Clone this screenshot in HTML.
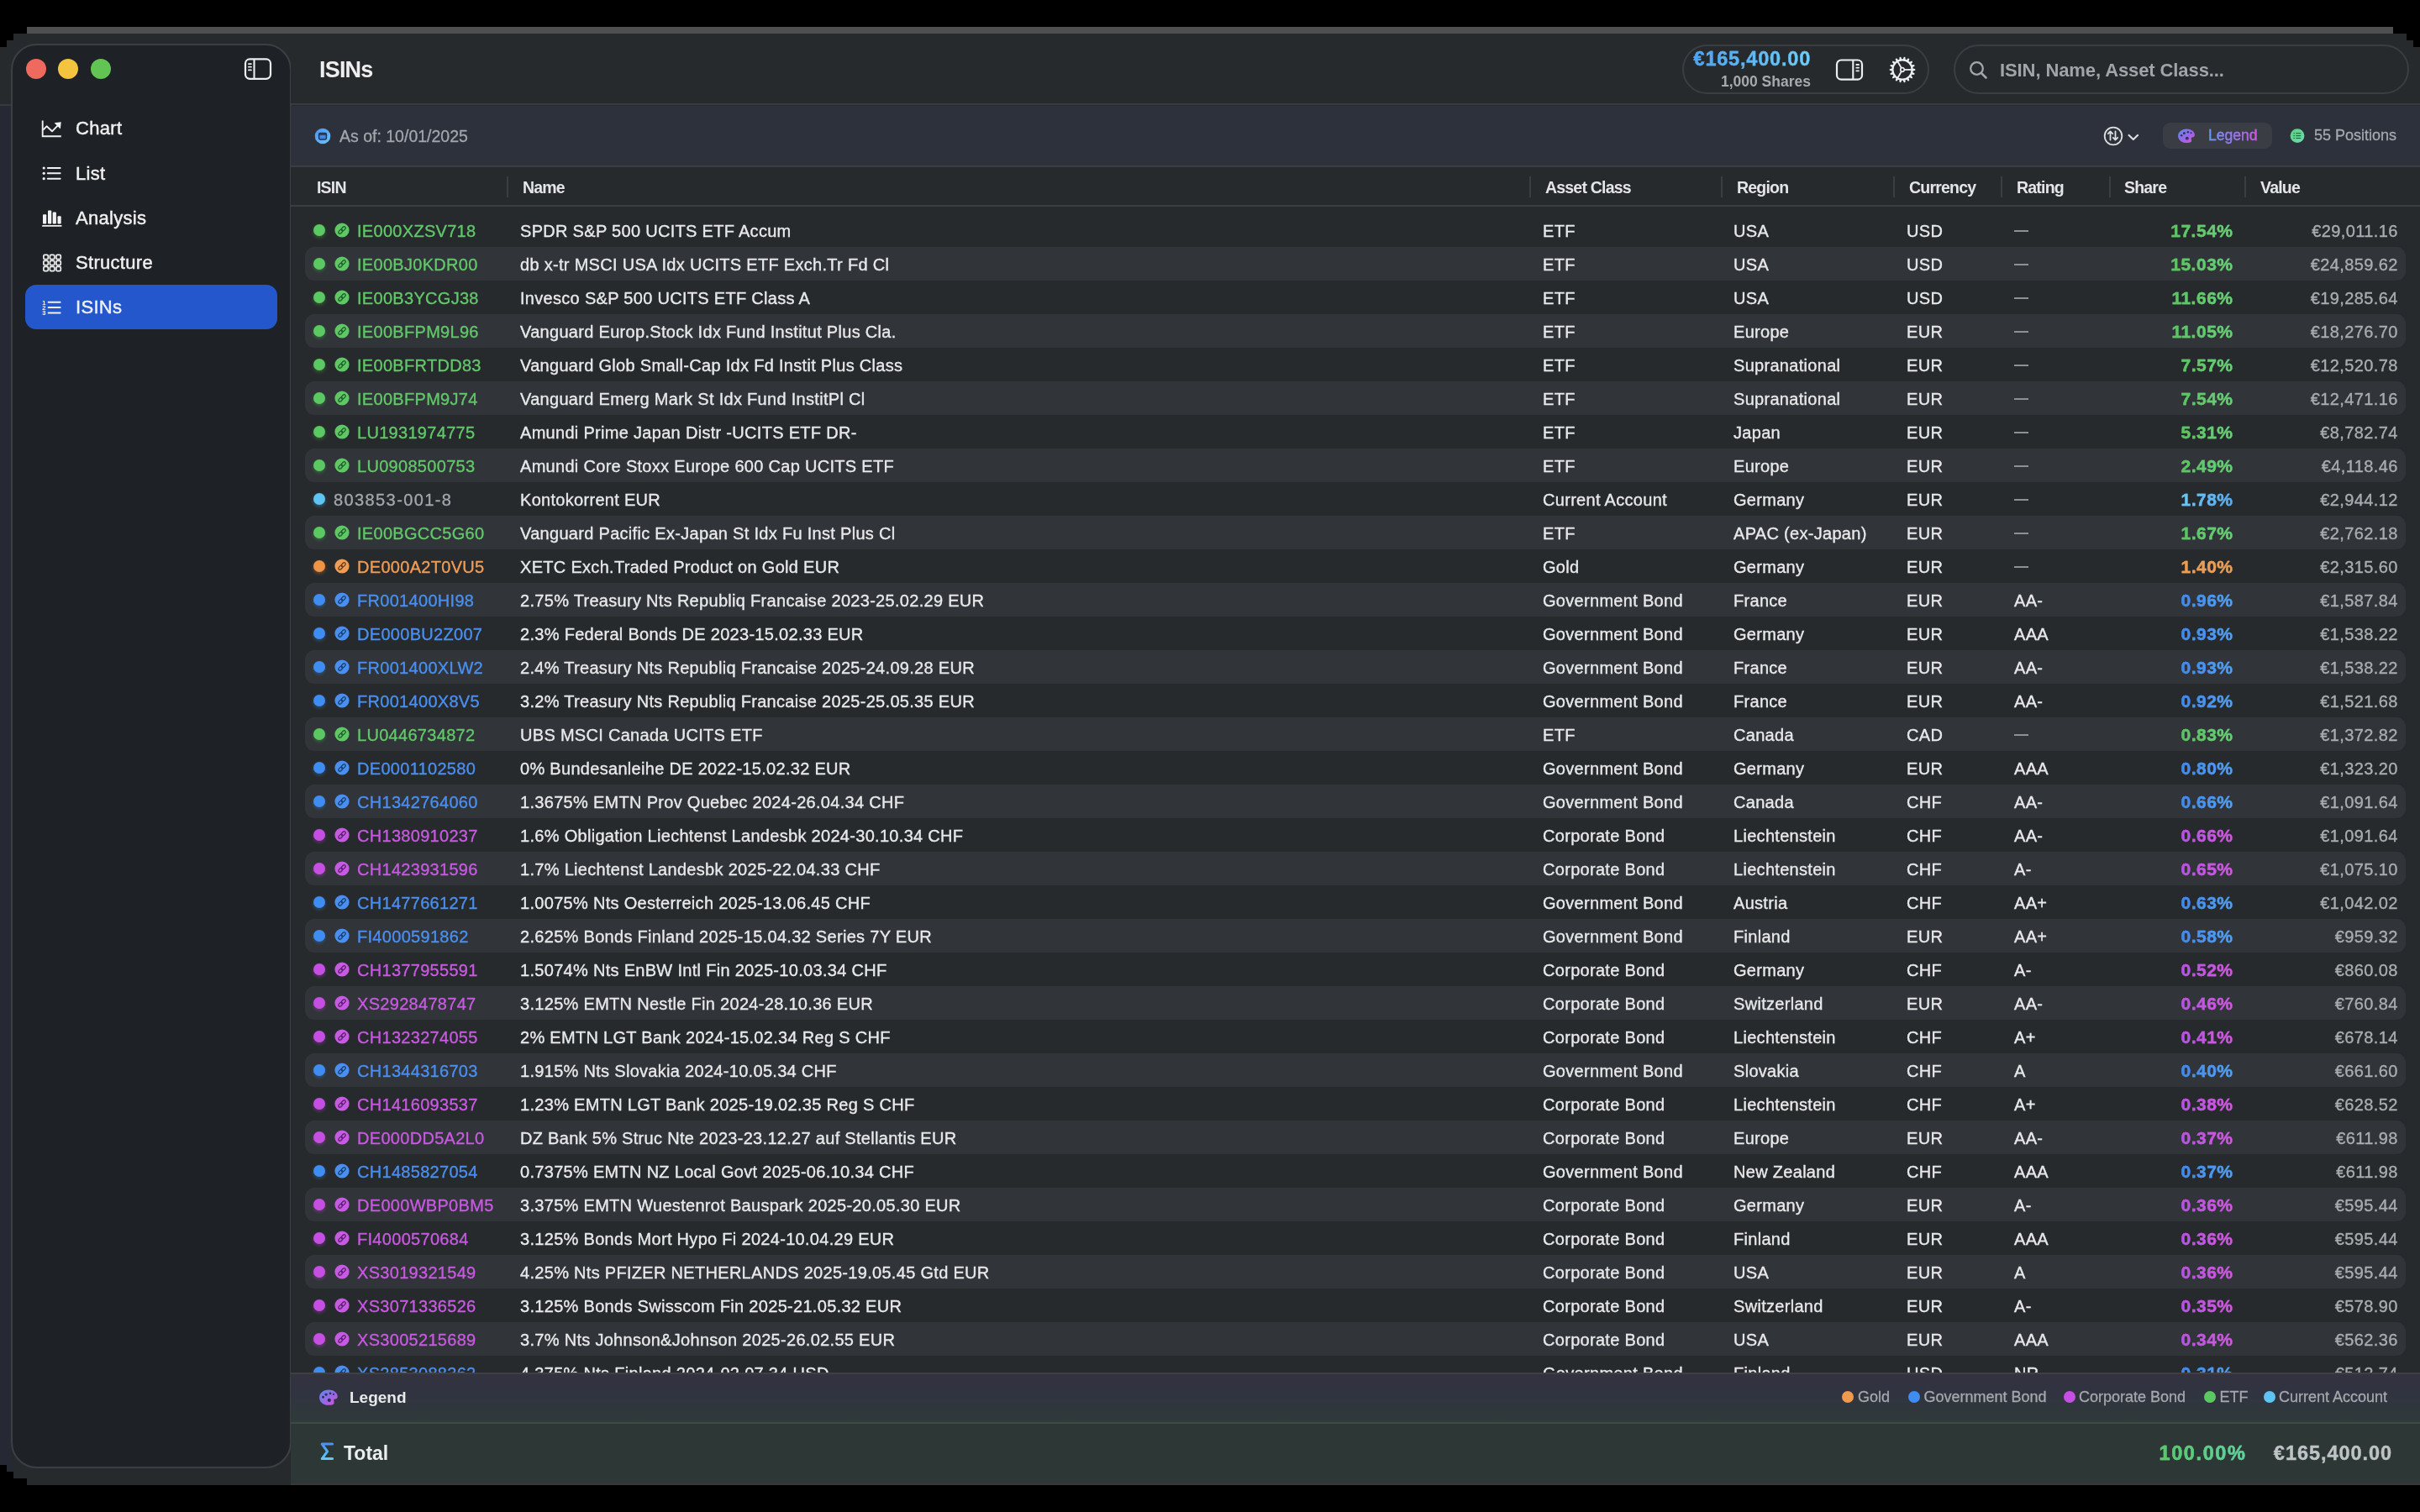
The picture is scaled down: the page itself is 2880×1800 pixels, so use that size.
<!DOCTYPE html>
<html><head><meta charset="utf-8">
<style>
*{margin:0;padding:0;box-sizing:border-box}
html,body{width:2880px;height:1800px;overflow:hidden;background:#000;font-family:"Liberation Sans",sans-serif;color:#e6e7e8}
.abs{position:absolute}
#gbar{position:absolute;left:32px;top:32px;width:2816px;height:8px;background:#4f4f50}
.wb{position:absolute;background:#272a2d}
#side{position:absolute;left:13px;top:52px;width:334px;height:1696px;border:2px solid #3c4045;border-radius:31px;background:#1e2125}
.tl{position:absolute;top:70px;width:24px;height:24px;border-radius:50%}
#main{position:absolute;left:346px;top:56px;width:2534px;height:1712px}
#toolbar{position:absolute;left:0;top:0;width:2534px;height:69px;background:#272a2d;border-bottom:2px solid #383c41}
#filter{position:absolute;left:0;top:70px;width:2534px;height:73px;background:#2c313b;border-bottom:2px solid #3a3e44}
#head{position:absolute;left:0;top:143px;width:2534px;height:47px;background:#272a2c;border-bottom:2px solid #3a3d41}
#tbl{position:absolute;left:0;top:190px;width:2534px;height:1388px;background:#272a2c;overflow:hidden}
#legend{position:absolute;left:0;top:1578px;width:2534px;height:59px;background:#33343e;border-top:2px solid #3d4046;border-bottom:2px solid #3a4442}
#total{position:absolute;left:0;top:1637px;width:2534px;height:75px;background:#2c3535}
.row{position:absolute;left:0;width:2880px;height:40px;font-size:20px;line-height:40px;white-space:nowrap;-webkit-text-stroke:0.35px currentColor;letter-spacing:.3px}
.row span{position:absolute;top:1px}
.stripe{position:absolute;left:363px;width:2500px;top:0;height:40px;border-radius:11px;background:#313438}
.dot{position:absolute;left:373px;top:13px;width:14px;height:14px;border-radius:50%}
.lk{position:absolute;left:398px;top:11px}
.isin{letter-spacing:.3px}
.nm{left:619px;color:#e8e9ea}
.ac{left:1836px;color:#e8e9ea}
.rg{left:2063px;color:#e8e9ea}
.cu{left:2269px;color:#e8e9ea}
.rat{left:2397px;color:#e8e9ea}
.em{position:absolute;left:0;top:19px;width:17px;height:2px;background:#8d9095}
.sh{right:222.5px;font-weight:bold;font-size:21px;letter-spacing:.5px;-webkit-background-clip:text;background-clip:text;color:transparent}
.va{right:26.2px;color:#a9acb0;letter-spacing:.4px}
.hd{position:absolute;top:1px;height:47px;line-height:47px;font-size:19.5px;letter-spacing:-.8px;font-weight:bold;color:#e4e5e6}
.hdiv{position:absolute;top:11px;width:2px;height:25px;background:#3a3d41}
.nav{position:absolute;left:90px;height:54px;line-height:54px;font-size:22px;color:#f0f0f0;-webkit-text-stroke:.45px currentColor;letter-spacing:.3px}
.navic{position:absolute;left:49px}
.lg span{position:absolute;top:0}
.ld{position:absolute;top:22px;width:14px;height:14px;border-radius:50%}
</style></head>
<body>
<div id="wrap" style="position:absolute;left:0;top:0;width:2880px;height:1800px;will-change:transform">
<div id="gbar"></div>
<div class="wb" style="left:16px;top:40px;width:2848px;height:8px"></div>
<div class="wb" style="left:8px;top:48px;width:2864px;height:8px"></div>
<div class="wb" style="left:0;top:56px;width:2880px;height:1688px"></div>
<div class="wb" style="left:8px;top:1744px;width:2872px;height:8px"></div>
<div class="wb" style="left:16px;top:1752px;width:2864px;height:8px"></div>
<div class="wb" style="left:32px;top:1760px;width:2848px;height:8px"></div>

<div class="abs" style="left:0;top:124px;width:14px;height:2px;background:#363a3f"></div>
<div class="abs" style="left:0;top:126px;width:13px;height:1618px;background:#252933"></div>
<div class="abs" style="left:8px;top:1744px;width:8px;height:8px;background:#252933"></div>
<div id="side"></div>
<div class="tl" style="left:31px;background:#ee6a5f"></div>
<div class="tl" style="left:69px;background:#f5c43f"></div>
<div class="tl" style="left:108px;background:#62c553"></div>

<!-- sidebar toggle icon -->
<svg class="abs" style="left:289px;top:67px" width="36" height="30" viewBox="0 0 36 30">
 <rect x="3" y="3.4" width="30" height="23.4" rx="5.2" fill="none" stroke="#eceeef" stroke-width="2.2"/>
 <line x1="13.5" y1="3.4" x2="13.5" y2="26.8" stroke="#eceeef" stroke-width="2.1"/>
 <g stroke="#eceeef" stroke-width="1.8" stroke-linecap="round"><line x1="6.9" y1="9.1" x2="9.9" y2="9.1"/><line x1="6.9" y1="12.7" x2="9.9" y2="12.7"/><line x1="6.9" y1="16.4" x2="9.9" y2="16.4"/></g>
</svg>

<!-- nav -->
<div class="abs" style="left:30px;top:339px;width:300px;height:53px;border-radius:13px;background:#2457cc"></div>
<svg class="navic abs" style="top:143px" width="26" height="22" viewBox="0 0 26 22">
 <path d="M1.7 0.6 V19.3 H23.8" fill="none" stroke="#f2f2f2" stroke-width="1.9"/>
 <path d="M2.4 11.6 L6.5 7.3 L13 13.3 L19.6 6.6" fill="none" stroke="#f2f2f2" stroke-width="1.9" stroke-linejoin="round"/>
 <path d="M23.8 2.2 L15.6 3.2 L22.8 10.4 Z" fill="#f2f2f2"/>
</svg>
<div class="nav" style="top:126px">Chart</div>
<svg class="navic abs" style="top:197px" width="26" height="20" viewBox="0 0 26 20">
 <g fill="#f2f2f2"><circle cx="3.2" cy="3" r="1.6"/><circle cx="3.2" cy="9.3" r="1.6"/><circle cx="3.2" cy="15.7" r="1.6"/></g>
 <g stroke="#f2f2f2" stroke-width="2" stroke-linecap="round"><line x1="7.8" y1="3" x2="22.6" y2="3"/><line x1="7.8" y1="9.3" x2="22.6" y2="9.3"/><line x1="7.8" y1="15.7" x2="22.6" y2="15.7"/></g>
</svg>
<div class="nav" style="top:180px">List</div>
<svg class="navic abs" style="top:249px" width="26" height="22" viewBox="0 0 26 22">
 <g fill="#f2f2f2"><rect x="2" y="6.3" width="4.2" height="11.1" rx="0.9"/><rect x="8" y="1.4" width="4.2" height="16" rx="0.9"/><rect x="13.7" y="3.5" width="4.2" height="13.9" rx="0.9"/><rect x="19.5" y="8.3" width="4.2" height="9.1" rx="0.9"/><rect x="1" y="19" width="23.6" height="1.8" rx="0.9"/></g>
</svg>
<div class="nav" style="top:233px">Analysis</div>
<svg class="navic abs" style="top:302px" width="26" height="24" viewBox="0 0 26 24">
 <g fill="none" stroke="#f2f2f2" stroke-width="1.7">
 <rect x="2.9" y="1.3" width="5.4" height="5.4" rx="1.5"/><rect x="10.4" y="1.3" width="5.4" height="5.4" rx="1.5"/><rect x="17.9" y="1.3" width="5.4" height="5.4" rx="1.5"/>
 <rect x="2.9" y="8.3" width="5.4" height="5.4" rx="1.5"/><rect x="10.4" y="8.3" width="5.4" height="5.4" rx="1.5"/><rect x="17.9" y="8.3" width="5.4" height="5.4" rx="1.5"/>
 <rect x="2.9" y="15.3" width="5.4" height="5.4" rx="1.5"/><rect x="10.4" y="15.3" width="5.4" height="5.4" rx="1.5"/><rect x="17.9" y="15.3" width="5.4" height="5.4" rx="1.5"/>
 </g>
</svg>
<div class="nav" style="top:286px">Structure</div>
<svg class="navic abs" style="top:355px" width="26" height="22" viewBox="0 0 26 22">
 <g fill="#f2f2f2" font-family="Liberation Sans" font-size="7.6" font-weight="bold"><text x="1.2" y="7.6">1</text><text x="1.2" y="14">2</text><text x="1.2" y="20.4">3</text></g>
 <g stroke="#f2f2f2" stroke-width="2" stroke-linecap="round"><line x1="8.6" y1="4.7" x2="22.6" y2="4.7"/><line x1="8.6" y1="11.1" x2="22.6" y2="11.1"/><line x1="8.6" y1="17.5" x2="22.6" y2="17.5"/></g>
</svg>
<div class="nav" style="top:339px">ISINs</div>

<div id="main">
 <div id="toolbar">
  <div class="abs" style="left:34px;top:12px;height:30px;line-height:30px;font-size:27px;font-weight:bold;color:#eeeeef;letter-spacing:-0.8px">ISINs</div>
  <!-- value capsule -->
  <div class="abs" style="left:1656px;top:-3px;width:294px;height:59px;border:2px solid #3a3e43;border-radius:30px"></div>
  <div class="abs" style="left:1600px;top:1px;width:209px;text-align:right;font-size:23.5px;letter-spacing:.8px;font-weight:bold;line-height:26px;background-image:linear-gradient(90deg,#3e8cf1,#6fd0f6);-webkit-background-clip:text;background-clip:text;color:transparent;-webkit-text-stroke:.3px #55aef3">€165,400.00</div>
  <div class="abs" style="left:1600px;top:31px;width:209px;text-align:right;font-size:17.5px;font-weight:bold;line-height:20px;color:#a6a9ad">1,000 Shares</div>
  <svg class="abs" style="left:1836px;top:12px" width="36" height="30" viewBox="0 0 36 30">
   <rect x="4" y="3.5" width="30" height="23.1" rx="5.2" fill="none" stroke="#eceeef" stroke-width="2.2"/>
   <line x1="23.3" y1="3.5" x2="23.3" y2="26.6" stroke="#eceeef" stroke-width="2.1"/>
   <g stroke="#eceeef" stroke-width="1.8" stroke-linecap="round"><line x1="27.3" y1="9" x2="30" y2="9"/><line x1="27.3" y1="12.65" x2="30" y2="12.65"/><line x1="27.3" y1="16.3" x2="30" y2="16.3"/></g>
  </svg>
  <svg class="abs" style="left:1900px;top:9px" width="36" height="36" viewBox="0 0 36 36">
   <g transform="translate(18,18)">
    <path fill="#eceeef" fill-rule="evenodd" d="M12.62 -1.44 L15.28 -0.80 L15.28 0.80 L12.62 1.44 L12.35 2.96 L14.63 4.47 L14.08 5.98 L11.37 5.67 L10.59 7.01 L12.22 9.21 L11.19 10.43 L8.74 9.21 L7.55 10.21 L8.33 12.83 L6.95 13.63 L5.06 11.65 L3.61 12.18 L3.44 14.91 L1.86 15.19 L0.78 12.68 L-0.78 12.68 L-1.86 15.19 L-3.44 14.91 L-3.61 12.18 L-5.06 11.65 L-6.95 13.63 L-8.33 12.83 L-7.55 10.21 L-8.74 9.21 L-11.19 10.43 L-12.22 9.21 L-10.59 7.01 L-11.37 5.67 L-14.08 5.98 L-14.63 4.47 L-12.35 2.96 L-12.62 1.44 L-15.28 0.80 L-15.28 -0.80 L-12.62 -1.44 L-12.35 -2.96 L-14.63 -4.47 L-14.08 -5.98 L-11.37 -5.67 L-10.59 -7.01 L-12.22 -9.21 L-11.19 -10.43 L-8.74 -9.21 L-7.55 -10.21 L-8.33 -12.83 L-6.95 -13.63 L-5.06 -11.65 L-3.61 -12.18 L-3.44 -14.91 L-1.86 -15.19 L-0.78 -12.68 L0.78 -12.68 L1.86 -15.19 L3.44 -14.91 L3.61 -12.18 L5.06 -11.65 L6.95 -13.63 L8.33 -12.83 L7.55 -10.21 L8.74 -9.21 L11.19 -10.43 L12.22 -9.21 L10.59 -7.01 L11.37 -5.67 L14.08 -5.98 L14.63 -4.47 L12.35 -2.96 Z M10.5 0 A10.5 10.5 0 1 0 -10.5 0 A10.5 10.5 0 1 0 10.5 0 Z"/><g stroke="#eceeef" stroke-width="1.8"><line x1="2.60" y1="0.00" x2="11.50" y2="0.00"/><line x1="-1.30" y1="2.25" x2="-5.75" y2="9.96"/><line x1="-1.30" y1="-2.25" x2="-5.75" y2="-9.96"/></g><circle r="2.3" fill="none" stroke="#eceeef" stroke-width="1.7"/>
   </g>
  </svg>
  <!-- search -->
  <div class="abs" style="left:1979px;top:-3px;width:542px;height:59px;border:2px solid #3a3e43;border-radius:30px"></div>
  <svg class="abs" style="left:1997px;top:16px" width="24" height="24" viewBox="0 0 24 24">
   <circle cx="9.5" cy="9.5" r="7.3" fill="none" stroke="#a3a6aa" stroke-width="2.3"/>
   <line x1="14.8" y1="14.8" x2="20.5" y2="20.5" stroke="#a3a6aa" stroke-width="2.6" stroke-linecap="round"/>
  </svg>
  <div class="abs" style="left:2034px;top:0;height:56px;line-height:56px;font-size:22px;letter-spacing:-.1px;font-weight:bold;color:#a1a4a8">ISIN, Name, Asset Class...</div>
 </div>

 <div id="filter">
  <svg class="abs" style="left:28px;top:26px" width="20" height="20" viewBox="0 0 20 20">
   <defs><linearGradient id="cg" x1="0" y1="0" x2="1" y2="1"><stop offset="0" stop-color="#4f92ee"/><stop offset="1" stop-color="#6cc6f6"/></linearGradient></defs>
   <circle cx="10" cy="10" r="9.3" fill="url(#cg)"/>
   <rect x="5.6" y="6.4" width="8.8" height="7.6" rx="1.4" fill="#4a86d8" stroke="#17365c" stroke-width="1.5"/>
   <line x1="5.6" y1="8" x2="14.4" y2="8" stroke="#17365c" stroke-width="1.6"/>
  </svg>
  <div class="abs" style="left:58px;top:0;height:72px;line-height:72px;font-size:19.5px;color:#a3a6ab;-webkit-text-stroke:.3px currentColor">As of: 10/01/2025</div>
  <!-- sort -->
  <svg class="abs" style="left:2156px;top:23px" width="48" height="26" viewBox="0 0 48 26">
   <circle cx="13" cy="13" r="10.3" fill="none" stroke="#dcdee0" stroke-width="1.8"/>
   <g stroke="#dcdee0" stroke-width="1.8" fill="none" stroke-linecap="round" stroke-linejoin="round">
    <path d="M9.5 17.5 V7.5 M6.8 10.2 L9.5 7.5 L12.2 10.2"/>
    <path d="M15.5 7.5 V17.5 M12.8 14.8 L15.5 17.5 L18.2 14.8"/>
    <path d="M31.6 12 L36.8 17 L42 12" stroke-width="2.2"/>
   </g>
  </svg>
  <div class="abs" style="left:2228px;top:20px;width:130px;height:31px;border-radius:9px;background:#3a3d44"></div>
  <svg class="abs" style="left:2246px;top:27px" width="22" height="18" viewBox="0 0 22 18">
   <defs><linearGradient id="pg" x1="0" y1="0" x2="1" y2="1"><stop offset="0" stop-color="#5b8cf0"/><stop offset=".55" stop-color="#9a66e8"/><stop offset="1" stop-color="#e04fd6"/></linearGradient></defs>
   <path d="M10 0.4 C15.5 0.4 19.9 3.5 19.9 7.6 C19.9 9.6 18.6 10.4 17 10.4 C16 10.4 15.6 11.2 15.9 12.4 C16.3 14 16.5 15.8 14.5 16.6 C13 17.1 11.5 17.1 10 17.1 C4.5 17.1 0.1 13.5 0.1 8.7 C0.1 4.1 4.5 0.4 10 0.4 Z" fill="url(#pg)"/>
   <g fill="#34325a"><circle cx="4.1" cy="8.3" r="1.3"/><circle cx="7.4" cy="5.4" r="1.5"/><circle cx="11.9" cy="4.3" r="1.2"/><circle cx="15.6" cy="5.2" r="1.05"/><circle cx="10.8" cy="11.7" r="1.9"/></g>
  </svg>
  <div class="abs" style="left:2282px;top:20px;height:31px;line-height:31px;font-size:17.5px;background-image:linear-gradient(90deg,#5a9df0,#9a78ea,#d653e0);-webkit-background-clip:text;background-clip:text;color:transparent;-webkit-text-stroke:.3px #8f7ae9">Legend</div>
  <svg class="abs" style="left:2379px;top:27px" width="18" height="18" viewBox="0 0 18 18">
   <defs><linearGradient id="gg" x1="0" y1="0" x2="1" y2="1"><stop offset="0" stop-color="#5ccf78"/><stop offset="1" stop-color="#70dbb4"/></linearGradient></defs>
   <circle cx="9" cy="8.6" r="8.4" fill="url(#gg)"/>
   <g stroke="#1f6a40" stroke-width="1.15"><line x1="7.2" y1="5.7" x2="13.3" y2="5.7"/><line x1="7.2" y1="8.6" x2="13.3" y2="8.6"/><line x1="7.2" y1="11.5" x2="13.3" y2="11.5"/><line x1="4.4" y1="5.7" x2="5.9" y2="5.7"/><line x1="4.4" y1="8.6" x2="5.9" y2="8.6"/><line x1="4.4" y1="11.5" x2="5.9" y2="11.5"/></g>
  </svg>
  <div class="abs" style="left:2408px;top:20px;height:31px;line-height:31px;font-size:18px;color:#a6a9ad;-webkit-text-stroke:.3px currentColor">55 Positions</div>
 </div>

 <div id="tbl"></div>
 <div id="head">
  <div class="hd" style="left:31px">ISIN</div>
  <div class="hdiv" style="left:257px"></div>
  <div class="hd" style="left:276px">Name</div>
  <div class="hdiv" style="left:1474px"></div>
  <div class="hd" style="left:1493px">Asset Class</div>
  <div class="hdiv" style="left:1702px"></div>
  <div class="hd" style="left:1721px">Region</div>
  <div class="hdiv" style="left:1907px"></div>
  <div class="hd" style="left:1926px">Currency</div>
  <div class="hdiv" style="left:2035px"></div>
  <div class="hd" style="left:2054px">Rating</div>
  <div class="hdiv" style="left:2164px"></div>
  <div class="hd" style="left:2182px">Share</div>
  <div class="hdiv" style="left:2325px"></div>
  <div class="hd" style="left:2344px">Value</div>
 </div>
</div>

<div id="rows" style="position:absolute;left:0;top:0;width:2880px;height:1634px;overflow:hidden;clip-path:inset(246px 0 0 346px)">
<div class="row" style="top:254px"><i class="dot" style="background:#5bc862;box-shadow:0 2px 4px #5bc86255"></i><svg class="lk" width="18" height="18" viewBox="0 0 18 18"><circle cx="9" cy="9" r="8.6" fill="#5fc766"/><g transform="rotate(-45 9 9)" fill="none" stroke="#1f5c25" stroke-width="1.25"><rect x="3.7" y="7.3" width="5.8" height="3.4" rx="1.7"/><rect x="8.5" y="7.3" width="5.8" height="3.4" rx="1.7"/></g></svg><span class="isin" style="left:425px;color:#62c76a">IE000XZSV718</span><span class="nm">SPDR S&amp;P 500 UCITS ETF Accum</span><span class="ac">ETF</span><span class="rg">USA</span><span class="cu">USD</span><span class="rat dash"><b class='em'></b></span><span class="sh" style="background-image:linear-gradient(90deg,#5ac35f,#6dd07e);-webkit-text-stroke:.35px #62c96e">17.54%</span><span class="va">€29,011.16</span></div>
<div class="row" style="top:294px"><div class="stripe"></div><i class="dot" style="background:#5bc862;box-shadow:0 2px 4px #5bc86255"></i><svg class="lk" width="18" height="18" viewBox="0 0 18 18"><circle cx="9" cy="9" r="8.6" fill="#5fc766"/><g transform="rotate(-45 9 9)" fill="none" stroke="#1f5c25" stroke-width="1.25"><rect x="3.7" y="7.3" width="5.8" height="3.4" rx="1.7"/><rect x="8.5" y="7.3" width="5.8" height="3.4" rx="1.7"/></g></svg><span class="isin" style="left:425px;color:#62c76a">IE00BJ0KDR00</span><span class="nm">db x-tr MSCI USA Idx UCITS ETF Exch.Tr Fd Cl</span><span class="ac">ETF</span><span class="rg">USA</span><span class="cu">USD</span><span class="rat dash"><b class='em'></b></span><span class="sh" style="background-image:linear-gradient(90deg,#5ac35f,#6dd07e);-webkit-text-stroke:.35px #62c96e">15.03%</span><span class="va">€24,859.62</span></div>
<div class="row" style="top:334px"><i class="dot" style="background:#5bc862;box-shadow:0 2px 4px #5bc86255"></i><svg class="lk" width="18" height="18" viewBox="0 0 18 18"><circle cx="9" cy="9" r="8.6" fill="#5fc766"/><g transform="rotate(-45 9 9)" fill="none" stroke="#1f5c25" stroke-width="1.25"><rect x="3.7" y="7.3" width="5.8" height="3.4" rx="1.7"/><rect x="8.5" y="7.3" width="5.8" height="3.4" rx="1.7"/></g></svg><span class="isin" style="left:425px;color:#62c76a">IE00B3YCGJ38</span><span class="nm">Invesco S&amp;P 500 UCITS ETF Class A</span><span class="ac">ETF</span><span class="rg">USA</span><span class="cu">USD</span><span class="rat dash"><b class='em'></b></span><span class="sh" style="background-image:linear-gradient(90deg,#5ac35f,#6dd07e);-webkit-text-stroke:.35px #62c96e">11.66%</span><span class="va">€19,285.64</span></div>
<div class="row" style="top:374px"><div class="stripe"></div><i class="dot" style="background:#5bc862;box-shadow:0 2px 4px #5bc86255"></i><svg class="lk" width="18" height="18" viewBox="0 0 18 18"><circle cx="9" cy="9" r="8.6" fill="#5fc766"/><g transform="rotate(-45 9 9)" fill="none" stroke="#1f5c25" stroke-width="1.25"><rect x="3.7" y="7.3" width="5.8" height="3.4" rx="1.7"/><rect x="8.5" y="7.3" width="5.8" height="3.4" rx="1.7"/></g></svg><span class="isin" style="left:425px;color:#62c76a">IE00BFPM9L96</span><span class="nm">Vanguard Europ.Stock Idx Fund Institut Plus Cla.</span><span class="ac">ETF</span><span class="rg">Europe</span><span class="cu">EUR</span><span class="rat dash"><b class='em'></b></span><span class="sh" style="background-image:linear-gradient(90deg,#5ac35f,#6dd07e);-webkit-text-stroke:.35px #62c96e">11.05%</span><span class="va">€18,276.70</span></div>
<div class="row" style="top:414px"><i class="dot" style="background:#5bc862;box-shadow:0 2px 4px #5bc86255"></i><svg class="lk" width="18" height="18" viewBox="0 0 18 18"><circle cx="9" cy="9" r="8.6" fill="#5fc766"/><g transform="rotate(-45 9 9)" fill="none" stroke="#1f5c25" stroke-width="1.25"><rect x="3.7" y="7.3" width="5.8" height="3.4" rx="1.7"/><rect x="8.5" y="7.3" width="5.8" height="3.4" rx="1.7"/></g></svg><span class="isin" style="left:425px;color:#62c76a">IE00BFRTDD83</span><span class="nm">Vanguard Glob Small-Cap Idx Fd Instit Plus Class</span><span class="ac">ETF</span><span class="rg">Supranational</span><span class="cu">EUR</span><span class="rat dash"><b class='em'></b></span><span class="sh" style="background-image:linear-gradient(90deg,#5ac35f,#6dd07e);-webkit-text-stroke:.35px #62c96e">7.57%</span><span class="va">€12,520.78</span></div>
<div class="row" style="top:454px"><div class="stripe"></div><i class="dot" style="background:#5bc862;box-shadow:0 2px 4px #5bc86255"></i><svg class="lk" width="18" height="18" viewBox="0 0 18 18"><circle cx="9" cy="9" r="8.6" fill="#5fc766"/><g transform="rotate(-45 9 9)" fill="none" stroke="#1f5c25" stroke-width="1.25"><rect x="3.7" y="7.3" width="5.8" height="3.4" rx="1.7"/><rect x="8.5" y="7.3" width="5.8" height="3.4" rx="1.7"/></g></svg><span class="isin" style="left:425px;color:#62c76a">IE00BFPM9J74</span><span class="nm">Vanguard Emerg Mark St Idx Fund InstitPl Cl</span><span class="ac">ETF</span><span class="rg">Supranational</span><span class="cu">EUR</span><span class="rat dash"><b class='em'></b></span><span class="sh" style="background-image:linear-gradient(90deg,#5ac35f,#6dd07e);-webkit-text-stroke:.35px #62c96e">7.54%</span><span class="va">€12,471.16</span></div>
<div class="row" style="top:494px"><i class="dot" style="background:#5bc862;box-shadow:0 2px 4px #5bc86255"></i><svg class="lk" width="18" height="18" viewBox="0 0 18 18"><circle cx="9" cy="9" r="8.6" fill="#5fc766"/><g transform="rotate(-45 9 9)" fill="none" stroke="#1f5c25" stroke-width="1.25"><rect x="3.7" y="7.3" width="5.8" height="3.4" rx="1.7"/><rect x="8.5" y="7.3" width="5.8" height="3.4" rx="1.7"/></g></svg><span class="isin" style="left:425px;color:#62c76a">LU1931974775</span><span class="nm">Amundi Prime Japan Distr -UCITS ETF DR-</span><span class="ac">ETF</span><span class="rg">Japan</span><span class="cu">EUR</span><span class="rat dash"><b class='em'></b></span><span class="sh" style="background-image:linear-gradient(90deg,#5ac35f,#6dd07e);-webkit-text-stroke:.35px #62c96e">5.31%</span><span class="va">€8,782.74</span></div>
<div class="row" style="top:534px"><div class="stripe"></div><i class="dot" style="background:#5bc862;box-shadow:0 2px 4px #5bc86255"></i><svg class="lk" width="18" height="18" viewBox="0 0 18 18"><circle cx="9" cy="9" r="8.6" fill="#5fc766"/><g transform="rotate(-45 9 9)" fill="none" stroke="#1f5c25" stroke-width="1.25"><rect x="3.7" y="7.3" width="5.8" height="3.4" rx="1.7"/><rect x="8.5" y="7.3" width="5.8" height="3.4" rx="1.7"/></g></svg><span class="isin" style="left:425px;color:#62c76a">LU0908500753</span><span class="nm">Amundi Core Stoxx Europe 600 Cap UCITS ETF</span><span class="ac">ETF</span><span class="rg">Europe</span><span class="cu">EUR</span><span class="rat dash"><b class='em'></b></span><span class="sh" style="background-image:linear-gradient(90deg,#5ac35f,#6dd07e);-webkit-text-stroke:.35px #62c96e">2.49%</span><span class="va">€4,118.46</span></div>
<div class="row" style="top:574px"><i class="dot" style="background:#5ec4f2;box-shadow:0 2px 4px #5ec4f255"></i><span class="isin" style="left:397px;color:#a3a6ab;letter-spacing:1.4px">803853-001-8</span><span class="nm">Kontokorrent EUR</span><span class="ac">Current Account</span><span class="rg">Germany</span><span class="cu">EUR</span><span class="rat dash"><b class='em'></b></span><span class="sh" style="background-image:linear-gradient(90deg,#6cc8f0,#5aa8ef);-webkit-text-stroke:.35px #63b8ef">1.78%</span><span class="va">€2,944.12</span></div>
<div class="row" style="top:614px"><div class="stripe"></div><i class="dot" style="background:#5bc862;box-shadow:0 2px 4px #5bc86255"></i><svg class="lk" width="18" height="18" viewBox="0 0 18 18"><circle cx="9" cy="9" r="8.6" fill="#5fc766"/><g transform="rotate(-45 9 9)" fill="none" stroke="#1f5c25" stroke-width="1.25"><rect x="3.7" y="7.3" width="5.8" height="3.4" rx="1.7"/><rect x="8.5" y="7.3" width="5.8" height="3.4" rx="1.7"/></g></svg><span class="isin" style="left:425px;color:#62c76a">IE00BGCC5G60</span><span class="nm">Vanguard Pacific Ex-Japan St Idx Fu Inst Plus Cl</span><span class="ac">ETF</span><span class="rg">APAC (ex-Japan)</span><span class="cu">EUR</span><span class="rat dash"><b class='em'></b></span><span class="sh" style="background-image:linear-gradient(90deg,#5ac35f,#6dd07e);-webkit-text-stroke:.35px #62c96e">1.67%</span><span class="va">€2,762.18</span></div>
<div class="row" style="top:654px"><i class="dot" style="background:#ef9445;box-shadow:0 2px 4px #ef944555"></i><svg class="lk" width="18" height="18" viewBox="0 0 18 18"><circle cx="9" cy="9" r="8.6" fill="#ef9c55"/><g transform="rotate(-45 9 9)" fill="none" stroke="#6a3a12" stroke-width="1.25"><rect x="3.7" y="7.3" width="5.8" height="3.4" rx="1.7"/><rect x="8.5" y="7.3" width="5.8" height="3.4" rx="1.7"/></g></svg><span class="isin" style="left:425px;color:#ef9c55">DE000A2T0VU5</span><span class="nm">XETC Exch.Traded Product on Gold EUR</span><span class="ac">Gold</span><span class="rg">Germany</span><span class="cu">EUR</span><span class="rat dash"><b class='em'></b></span><span class="sh" style="background-image:linear-gradient(90deg,#ee9c4e,#e8a05a);-webkit-text-stroke:.35px #eb9e54">1.40%</span><span class="va">€2,315.60</span></div>
<div class="row" style="top:694px"><div class="stripe"></div><i class="dot" style="background:#3f8cf2;box-shadow:0 2px 4px #3f8cf255"></i><svg class="lk" width="18" height="18" viewBox="0 0 18 18"><circle cx="9" cy="9" r="8.6" fill="#4a8ff0"/><g transform="rotate(-45 9 9)" fill="none" stroke="#173d73" stroke-width="1.25"><rect x="3.7" y="7.3" width="5.8" height="3.4" rx="1.7"/><rect x="8.5" y="7.3" width="5.8" height="3.4" rx="1.7"/></g></svg><span class="isin" style="left:425px;color:#4a8ff0">FR001400HI98</span><span class="nm">2.75% Treasury Nts Republiq Francaise 2023-25.02.29 EUR</span><span class="ac">Government Bond</span><span class="rg">France</span><span class="cu">EUR</span><span class="rat">AA-</span><span class="sh" style="background-image:linear-gradient(90deg,#3e88f0,#58a2f2);-webkit-text-stroke:.35px #4a94f1">0.96%</span><span class="va">€1,587.84</span></div>
<div class="row" style="top:734px"><i class="dot" style="background:#3f8cf2;box-shadow:0 2px 4px #3f8cf255"></i><svg class="lk" width="18" height="18" viewBox="0 0 18 18"><circle cx="9" cy="9" r="8.6" fill="#4a8ff0"/><g transform="rotate(-45 9 9)" fill="none" stroke="#173d73" stroke-width="1.25"><rect x="3.7" y="7.3" width="5.8" height="3.4" rx="1.7"/><rect x="8.5" y="7.3" width="5.8" height="3.4" rx="1.7"/></g></svg><span class="isin" style="left:425px;color:#4a8ff0">DE000BU2Z007</span><span class="nm">2.3% Federal Bonds DE 2023-15.02.33 EUR</span><span class="ac">Government Bond</span><span class="rg">Germany</span><span class="cu">EUR</span><span class="rat">AAA</span><span class="sh" style="background-image:linear-gradient(90deg,#3e88f0,#58a2f2);-webkit-text-stroke:.35px #4a94f1">0.93%</span><span class="va">€1,538.22</span></div>
<div class="row" style="top:774px"><div class="stripe"></div><i class="dot" style="background:#3f8cf2;box-shadow:0 2px 4px #3f8cf255"></i><svg class="lk" width="18" height="18" viewBox="0 0 18 18"><circle cx="9" cy="9" r="8.6" fill="#4a8ff0"/><g transform="rotate(-45 9 9)" fill="none" stroke="#173d73" stroke-width="1.25"><rect x="3.7" y="7.3" width="5.8" height="3.4" rx="1.7"/><rect x="8.5" y="7.3" width="5.8" height="3.4" rx="1.7"/></g></svg><span class="isin" style="left:425px;color:#4a8ff0">FR001400XLW2</span><span class="nm">2.4% Treasury Nts Republiq Francaise 2025-24.09.28 EUR</span><span class="ac">Government Bond</span><span class="rg">France</span><span class="cu">EUR</span><span class="rat">AA-</span><span class="sh" style="background-image:linear-gradient(90deg,#3e88f0,#58a2f2);-webkit-text-stroke:.35px #4a94f1">0.93%</span><span class="va">€1,538.22</span></div>
<div class="row" style="top:814px"><i class="dot" style="background:#3f8cf2;box-shadow:0 2px 4px #3f8cf255"></i><svg class="lk" width="18" height="18" viewBox="0 0 18 18"><circle cx="9" cy="9" r="8.6" fill="#4a8ff0"/><g transform="rotate(-45 9 9)" fill="none" stroke="#173d73" stroke-width="1.25"><rect x="3.7" y="7.3" width="5.8" height="3.4" rx="1.7"/><rect x="8.5" y="7.3" width="5.8" height="3.4" rx="1.7"/></g></svg><span class="isin" style="left:425px;color:#4a8ff0">FR001400X8V5</span><span class="nm">3.2% Treasury Nts Republiq Francaise 2025-25.05.35 EUR</span><span class="ac">Government Bond</span><span class="rg">France</span><span class="cu">EUR</span><span class="rat">AA-</span><span class="sh" style="background-image:linear-gradient(90deg,#3e88f0,#58a2f2);-webkit-text-stroke:.35px #4a94f1">0.92%</span><span class="va">€1,521.68</span></div>
<div class="row" style="top:854px"><div class="stripe"></div><i class="dot" style="background:#5bc862;box-shadow:0 2px 4px #5bc86255"></i><svg class="lk" width="18" height="18" viewBox="0 0 18 18"><circle cx="9" cy="9" r="8.6" fill="#5fc766"/><g transform="rotate(-45 9 9)" fill="none" stroke="#1f5c25" stroke-width="1.25"><rect x="3.7" y="7.3" width="5.8" height="3.4" rx="1.7"/><rect x="8.5" y="7.3" width="5.8" height="3.4" rx="1.7"/></g></svg><span class="isin" style="left:425px;color:#62c76a">LU0446734872</span><span class="nm">UBS MSCI Canada UCITS ETF</span><span class="ac">ETF</span><span class="rg">Canada</span><span class="cu">CAD</span><span class="rat dash"><b class='em'></b></span><span class="sh" style="background-image:linear-gradient(90deg,#5ac35f,#6dd07e);-webkit-text-stroke:.35px #62c96e">0.83%</span><span class="va">€1,372.82</span></div>
<div class="row" style="top:894px"><i class="dot" style="background:#3f8cf2;box-shadow:0 2px 4px #3f8cf255"></i><svg class="lk" width="18" height="18" viewBox="0 0 18 18"><circle cx="9" cy="9" r="8.6" fill="#4a8ff0"/><g transform="rotate(-45 9 9)" fill="none" stroke="#173d73" stroke-width="1.25"><rect x="3.7" y="7.3" width="5.8" height="3.4" rx="1.7"/><rect x="8.5" y="7.3" width="5.8" height="3.4" rx="1.7"/></g></svg><span class="isin" style="left:425px;color:#4a8ff0">DE0001102580</span><span class="nm">0% Bundesanleihe DE 2022-15.02.32 EUR</span><span class="ac">Government Bond</span><span class="rg">Germany</span><span class="cu">EUR</span><span class="rat">AAA</span><span class="sh" style="background-image:linear-gradient(90deg,#3e88f0,#58a2f2);-webkit-text-stroke:.35px #4a94f1">0.80%</span><span class="va">€1,323.20</span></div>
<div class="row" style="top:934px"><div class="stripe"></div><i class="dot" style="background:#3f8cf2;box-shadow:0 2px 4px #3f8cf255"></i><svg class="lk" width="18" height="18" viewBox="0 0 18 18"><circle cx="9" cy="9" r="8.6" fill="#4a8ff0"/><g transform="rotate(-45 9 9)" fill="none" stroke="#173d73" stroke-width="1.25"><rect x="3.7" y="7.3" width="5.8" height="3.4" rx="1.7"/><rect x="8.5" y="7.3" width="5.8" height="3.4" rx="1.7"/></g></svg><span class="isin" style="left:425px;color:#4a8ff0">CH1342764060</span><span class="nm">1.3675% EMTN Prov Quebec 2024-26.04.34 CHF</span><span class="ac">Government Bond</span><span class="rg">Canada</span><span class="cu">CHF</span><span class="rat">AA-</span><span class="sh" style="background-image:linear-gradient(90deg,#3e88f0,#58a2f2);-webkit-text-stroke:.35px #4a94f1">0.66%</span><span class="va">€1,091.64</span></div>
<div class="row" style="top:974px"><i class="dot" style="background:#c64fe3;box-shadow:0 2px 4px #c64fe355"></i><svg class="lk" width="18" height="18" viewBox="0 0 18 18"><circle cx="9" cy="9" r="8.6" fill="#c65ae2"/><g transform="rotate(-45 9 9)" fill="none" stroke="#5a1f6a" stroke-width="1.25"><rect x="3.7" y="7.3" width="5.8" height="3.4" rx="1.7"/><rect x="8.5" y="7.3" width="5.8" height="3.4" rx="1.7"/></g></svg><span class="isin" style="left:425px;color:#c859e2">CH1380910237</span><span class="nm">1.6% Obligation Liechtenst Landesbk 2024-30.10.34 CHF</span><span class="ac">Corporate Bond</span><span class="rg">Liechtenstein</span><span class="cu">CHF</span><span class="rat">AA-</span><span class="sh" style="background-image:linear-gradient(90deg,#b652e8,#d25bd9);-webkit-text-stroke:.35px #c456e0">0.66%</span><span class="va">€1,091.64</span></div>
<div class="row" style="top:1014px"><div class="stripe"></div><i class="dot" style="background:#c64fe3;box-shadow:0 2px 4px #c64fe355"></i><svg class="lk" width="18" height="18" viewBox="0 0 18 18"><circle cx="9" cy="9" r="8.6" fill="#c65ae2"/><g transform="rotate(-45 9 9)" fill="none" stroke="#5a1f6a" stroke-width="1.25"><rect x="3.7" y="7.3" width="5.8" height="3.4" rx="1.7"/><rect x="8.5" y="7.3" width="5.8" height="3.4" rx="1.7"/></g></svg><span class="isin" style="left:425px;color:#c859e2">CH1423931596</span><span class="nm">1.7% Liechtenst Landesbk 2025-22.04.33 CHF</span><span class="ac">Corporate Bond</span><span class="rg">Liechtenstein</span><span class="cu">CHF</span><span class="rat">A-</span><span class="sh" style="background-image:linear-gradient(90deg,#b652e8,#d25bd9);-webkit-text-stroke:.35px #c456e0">0.65%</span><span class="va">€1,075.10</span></div>
<div class="row" style="top:1054px"><i class="dot" style="background:#3f8cf2;box-shadow:0 2px 4px #3f8cf255"></i><svg class="lk" width="18" height="18" viewBox="0 0 18 18"><circle cx="9" cy="9" r="8.6" fill="#4a8ff0"/><g transform="rotate(-45 9 9)" fill="none" stroke="#173d73" stroke-width="1.25"><rect x="3.7" y="7.3" width="5.8" height="3.4" rx="1.7"/><rect x="8.5" y="7.3" width="5.8" height="3.4" rx="1.7"/></g></svg><span class="isin" style="left:425px;color:#4a8ff0">CH1477661271</span><span class="nm">1.0075% Nts Oesterreich 2025-13.06.45 CHF</span><span class="ac">Government Bond</span><span class="rg">Austria</span><span class="cu">CHF</span><span class="rat">AA+</span><span class="sh" style="background-image:linear-gradient(90deg,#3e88f0,#58a2f2);-webkit-text-stroke:.35px #4a94f1">0.63%</span><span class="va">€1,042.02</span></div>
<div class="row" style="top:1094px"><div class="stripe"></div><i class="dot" style="background:#3f8cf2;box-shadow:0 2px 4px #3f8cf255"></i><svg class="lk" width="18" height="18" viewBox="0 0 18 18"><circle cx="9" cy="9" r="8.6" fill="#4a8ff0"/><g transform="rotate(-45 9 9)" fill="none" stroke="#173d73" stroke-width="1.25"><rect x="3.7" y="7.3" width="5.8" height="3.4" rx="1.7"/><rect x="8.5" y="7.3" width="5.8" height="3.4" rx="1.7"/></g></svg><span class="isin" style="left:425px;color:#4a8ff0">FI4000591862</span><span class="nm">2.625% Bonds Finland 2025-15.04.32 Series 7Y EUR</span><span class="ac">Government Bond</span><span class="rg">Finland</span><span class="cu">EUR</span><span class="rat">AA+</span><span class="sh" style="background-image:linear-gradient(90deg,#3e88f0,#58a2f2);-webkit-text-stroke:.35px #4a94f1">0.58%</span><span class="va">€959.32</span></div>
<div class="row" style="top:1134px"><i class="dot" style="background:#c64fe3;box-shadow:0 2px 4px #c64fe355"></i><svg class="lk" width="18" height="18" viewBox="0 0 18 18"><circle cx="9" cy="9" r="8.6" fill="#c65ae2"/><g transform="rotate(-45 9 9)" fill="none" stroke="#5a1f6a" stroke-width="1.25"><rect x="3.7" y="7.3" width="5.8" height="3.4" rx="1.7"/><rect x="8.5" y="7.3" width="5.8" height="3.4" rx="1.7"/></g></svg><span class="isin" style="left:425px;color:#c859e2">CH1377955591</span><span class="nm">1.5074% Nts EnBW Intl Fin 2025-10.03.34 CHF</span><span class="ac">Corporate Bond</span><span class="rg">Germany</span><span class="cu">CHF</span><span class="rat">A-</span><span class="sh" style="background-image:linear-gradient(90deg,#b652e8,#d25bd9);-webkit-text-stroke:.35px #c456e0">0.52%</span><span class="va">€860.08</span></div>
<div class="row" style="top:1174px"><div class="stripe"></div><i class="dot" style="background:#c64fe3;box-shadow:0 2px 4px #c64fe355"></i><svg class="lk" width="18" height="18" viewBox="0 0 18 18"><circle cx="9" cy="9" r="8.6" fill="#c65ae2"/><g transform="rotate(-45 9 9)" fill="none" stroke="#5a1f6a" stroke-width="1.25"><rect x="3.7" y="7.3" width="5.8" height="3.4" rx="1.7"/><rect x="8.5" y="7.3" width="5.8" height="3.4" rx="1.7"/></g></svg><span class="isin" style="left:425px;color:#c859e2">XS2928478747</span><span class="nm">3.125% EMTN Nestle Fin 2024-28.10.36 EUR</span><span class="ac">Corporate Bond</span><span class="rg">Switzerland</span><span class="cu">EUR</span><span class="rat">AA-</span><span class="sh" style="background-image:linear-gradient(90deg,#b652e8,#d25bd9);-webkit-text-stroke:.35px #c456e0">0.46%</span><span class="va">€760.84</span></div>
<div class="row" style="top:1214px"><i class="dot" style="background:#c64fe3;box-shadow:0 2px 4px #c64fe355"></i><svg class="lk" width="18" height="18" viewBox="0 0 18 18"><circle cx="9" cy="9" r="8.6" fill="#c65ae2"/><g transform="rotate(-45 9 9)" fill="none" stroke="#5a1f6a" stroke-width="1.25"><rect x="3.7" y="7.3" width="5.8" height="3.4" rx="1.7"/><rect x="8.5" y="7.3" width="5.8" height="3.4" rx="1.7"/></g></svg><span class="isin" style="left:425px;color:#c859e2">CH1323274055</span><span class="nm">2% EMTN LGT Bank 2024-15.02.34 Reg S CHF</span><span class="ac">Corporate Bond</span><span class="rg">Liechtenstein</span><span class="cu">CHF</span><span class="rat">A+</span><span class="sh" style="background-image:linear-gradient(90deg,#b652e8,#d25bd9);-webkit-text-stroke:.35px #c456e0">0.41%</span><span class="va">€678.14</span></div>
<div class="row" style="top:1254px"><div class="stripe"></div><i class="dot" style="background:#3f8cf2;box-shadow:0 2px 4px #3f8cf255"></i><svg class="lk" width="18" height="18" viewBox="0 0 18 18"><circle cx="9" cy="9" r="8.6" fill="#4a8ff0"/><g transform="rotate(-45 9 9)" fill="none" stroke="#173d73" stroke-width="1.25"><rect x="3.7" y="7.3" width="5.8" height="3.4" rx="1.7"/><rect x="8.5" y="7.3" width="5.8" height="3.4" rx="1.7"/></g></svg><span class="isin" style="left:425px;color:#4a8ff0">CH1344316703</span><span class="nm">1.915% Nts Slovakia 2024-10.05.34 CHF</span><span class="ac">Government Bond</span><span class="rg">Slovakia</span><span class="cu">CHF</span><span class="rat">A</span><span class="sh" style="background-image:linear-gradient(90deg,#3e88f0,#58a2f2);-webkit-text-stroke:.35px #4a94f1">0.40%</span><span class="va">€661.60</span></div>
<div class="row" style="top:1294px"><i class="dot" style="background:#c64fe3;box-shadow:0 2px 4px #c64fe355"></i><svg class="lk" width="18" height="18" viewBox="0 0 18 18"><circle cx="9" cy="9" r="8.6" fill="#c65ae2"/><g transform="rotate(-45 9 9)" fill="none" stroke="#5a1f6a" stroke-width="1.25"><rect x="3.7" y="7.3" width="5.8" height="3.4" rx="1.7"/><rect x="8.5" y="7.3" width="5.8" height="3.4" rx="1.7"/></g></svg><span class="isin" style="left:425px;color:#c859e2">CH1416093537</span><span class="nm">1.23% EMTN LGT Bank 2025-19.02.35 Reg S CHF</span><span class="ac">Corporate Bond</span><span class="rg">Liechtenstein</span><span class="cu">CHF</span><span class="rat">A+</span><span class="sh" style="background-image:linear-gradient(90deg,#b652e8,#d25bd9);-webkit-text-stroke:.35px #c456e0">0.38%</span><span class="va">€628.52</span></div>
<div class="row" style="top:1334px"><div class="stripe"></div><i class="dot" style="background:#c64fe3;box-shadow:0 2px 4px #c64fe355"></i><svg class="lk" width="18" height="18" viewBox="0 0 18 18"><circle cx="9" cy="9" r="8.6" fill="#c65ae2"/><g transform="rotate(-45 9 9)" fill="none" stroke="#5a1f6a" stroke-width="1.25"><rect x="3.7" y="7.3" width="5.8" height="3.4" rx="1.7"/><rect x="8.5" y="7.3" width="5.8" height="3.4" rx="1.7"/></g></svg><span class="isin" style="left:425px;color:#c859e2">DE000DD5A2L0</span><span class="nm">DZ Bank 5% Struc Nte 2023-23.12.27 auf Stellantis EUR</span><span class="ac">Corporate Bond</span><span class="rg">Europe</span><span class="cu">EUR</span><span class="rat">AA-</span><span class="sh" style="background-image:linear-gradient(90deg,#b652e8,#d25bd9);-webkit-text-stroke:.35px #c456e0">0.37%</span><span class="va">€611.98</span></div>
<div class="row" style="top:1374px"><i class="dot" style="background:#3f8cf2;box-shadow:0 2px 4px #3f8cf255"></i><svg class="lk" width="18" height="18" viewBox="0 0 18 18"><circle cx="9" cy="9" r="8.6" fill="#4a8ff0"/><g transform="rotate(-45 9 9)" fill="none" stroke="#173d73" stroke-width="1.25"><rect x="3.7" y="7.3" width="5.8" height="3.4" rx="1.7"/><rect x="8.5" y="7.3" width="5.8" height="3.4" rx="1.7"/></g></svg><span class="isin" style="left:425px;color:#4a8ff0">CH1485827054</span><span class="nm">0.7375% EMTN NZ Local Govt 2025-06.10.34 CHF</span><span class="ac">Government Bond</span><span class="rg">New Zealand</span><span class="cu">CHF</span><span class="rat">AAA</span><span class="sh" style="background-image:linear-gradient(90deg,#3e88f0,#58a2f2);-webkit-text-stroke:.35px #4a94f1">0.37%</span><span class="va">€611.98</span></div>
<div class="row" style="top:1414px"><div class="stripe"></div><i class="dot" style="background:#c64fe3;box-shadow:0 2px 4px #c64fe355"></i><svg class="lk" width="18" height="18" viewBox="0 0 18 18"><circle cx="9" cy="9" r="8.6" fill="#c65ae2"/><g transform="rotate(-45 9 9)" fill="none" stroke="#5a1f6a" stroke-width="1.25"><rect x="3.7" y="7.3" width="5.8" height="3.4" rx="1.7"/><rect x="8.5" y="7.3" width="5.8" height="3.4" rx="1.7"/></g></svg><span class="isin" style="left:425px;color:#c859e2">DE000WBP0BM5</span><span class="nm">3.375% EMTN Wuestenrot Bauspark 2025-20.05.30 EUR</span><span class="ac">Corporate Bond</span><span class="rg">Germany</span><span class="cu">EUR</span><span class="rat">A-</span><span class="sh" style="background-image:linear-gradient(90deg,#b652e8,#d25bd9);-webkit-text-stroke:.35px #c456e0">0.36%</span><span class="va">€595.44</span></div>
<div class="row" style="top:1454px"><i class="dot" style="background:#c64fe3;box-shadow:0 2px 4px #c64fe355"></i><svg class="lk" width="18" height="18" viewBox="0 0 18 18"><circle cx="9" cy="9" r="8.6" fill="#c65ae2"/><g transform="rotate(-45 9 9)" fill="none" stroke="#5a1f6a" stroke-width="1.25"><rect x="3.7" y="7.3" width="5.8" height="3.4" rx="1.7"/><rect x="8.5" y="7.3" width="5.8" height="3.4" rx="1.7"/></g></svg><span class="isin" style="left:425px;color:#c859e2">FI4000570684</span><span class="nm">3.125% Bonds Mort Hypo Fi 2024-10.04.29 EUR</span><span class="ac">Corporate Bond</span><span class="rg">Finland</span><span class="cu">EUR</span><span class="rat">AAA</span><span class="sh" style="background-image:linear-gradient(90deg,#b652e8,#d25bd9);-webkit-text-stroke:.35px #c456e0">0.36%</span><span class="va">€595.44</span></div>
<div class="row" style="top:1494px"><div class="stripe"></div><i class="dot" style="background:#c64fe3;box-shadow:0 2px 4px #c64fe355"></i><svg class="lk" width="18" height="18" viewBox="0 0 18 18"><circle cx="9" cy="9" r="8.6" fill="#c65ae2"/><g transform="rotate(-45 9 9)" fill="none" stroke="#5a1f6a" stroke-width="1.25"><rect x="3.7" y="7.3" width="5.8" height="3.4" rx="1.7"/><rect x="8.5" y="7.3" width="5.8" height="3.4" rx="1.7"/></g></svg><span class="isin" style="left:425px;color:#c859e2">XS3019321549</span><span class="nm">4.25% Nts PFIZER NETHERLANDS 2025-19.05.45 Gtd EUR</span><span class="ac">Corporate Bond</span><span class="rg">USA</span><span class="cu">EUR</span><span class="rat">A</span><span class="sh" style="background-image:linear-gradient(90deg,#b652e8,#d25bd9);-webkit-text-stroke:.35px #c456e0">0.36%</span><span class="va">€595.44</span></div>
<div class="row" style="top:1534px"><i class="dot" style="background:#c64fe3;box-shadow:0 2px 4px #c64fe355"></i><svg class="lk" width="18" height="18" viewBox="0 0 18 18"><circle cx="9" cy="9" r="8.6" fill="#c65ae2"/><g transform="rotate(-45 9 9)" fill="none" stroke="#5a1f6a" stroke-width="1.25"><rect x="3.7" y="7.3" width="5.8" height="3.4" rx="1.7"/><rect x="8.5" y="7.3" width="5.8" height="3.4" rx="1.7"/></g></svg><span class="isin" style="left:425px;color:#c859e2">XS3071336526</span><span class="nm">3.125% Bonds Swisscom Fin 2025-21.05.32 EUR</span><span class="ac">Corporate Bond</span><span class="rg">Switzerland</span><span class="cu">EUR</span><span class="rat">A-</span><span class="sh" style="background-image:linear-gradient(90deg,#b652e8,#d25bd9);-webkit-text-stroke:.35px #c456e0">0.35%</span><span class="va">€578.90</span></div>
<div class="row" style="top:1574px"><div class="stripe"></div><i class="dot" style="background:#c64fe3;box-shadow:0 2px 4px #c64fe355"></i><svg class="lk" width="18" height="18" viewBox="0 0 18 18"><circle cx="9" cy="9" r="8.6" fill="#c65ae2"/><g transform="rotate(-45 9 9)" fill="none" stroke="#5a1f6a" stroke-width="1.25"><rect x="3.7" y="7.3" width="5.8" height="3.4" rx="1.7"/><rect x="8.5" y="7.3" width="5.8" height="3.4" rx="1.7"/></g></svg><span class="isin" style="left:425px;color:#c859e2">XS3005215689</span><span class="nm">3.7% Nts Johnson&amp;Johnson 2025-26.02.55 EUR</span><span class="ac">Corporate Bond</span><span class="rg">USA</span><span class="cu">EUR</span><span class="rat">AAA</span><span class="sh" style="background-image:linear-gradient(90deg,#b652e8,#d25bd9);-webkit-text-stroke:.35px #c456e0">0.34%</span><span class="va">€562.36</span></div>
<div class="row" style="top:1614px"><i class="dot" style="background:#3f8cf2;box-shadow:0 2px 4px #3f8cf255"></i><svg class="lk" width="18" height="18" viewBox="0 0 18 18"><circle cx="9" cy="9" r="8.6" fill="#4a8ff0"/><g transform="rotate(-45 9 9)" fill="none" stroke="#173d73" stroke-width="1.25"><rect x="3.7" y="7.3" width="5.8" height="3.4" rx="1.7"/><rect x="8.5" y="7.3" width="5.8" height="3.4" rx="1.7"/></g></svg><span class="isin" style="left:425px;color:#4a8ff0">XS2853088362</span><span class="nm">4.375% Nts Finland 2024-02.07.34 USD</span><span class="ac">Government Bond</span><span class="rg">Finland</span><span class="cu">USD</span><span class="rat">NR</span><span class="sh" style="background-image:linear-gradient(90deg,#3e88f0,#58a2f2);-webkit-text-stroke:.35px #4a94f1">0.31%</span><span class="va">€512.74</span></div>
</div>


<div id="legendwrap" style="position:absolute;left:346px;top:1634px;width:2534px;height:134px">
 <div class="abs" style="left:0;top:0;width:2534px;height:59px;background:linear-gradient(180deg,#33333f 0%,#313341 35%,#2f3a39 100%);border-top:2px solid #3d4046"></div>
 <div class="abs" style="left:0;top:59px;width:2534px;height:75px;background:#2d3736;border-top:2px solid #3c4a44;border-bottom:2px solid #3a3738"></div>
 <svg class="abs" style="left:34px;top:20px" width="24" height="20" viewBox="0 0 22 18">
  <defs><linearGradient id="pg2" x1="0" y1="0" x2="1" y2="1"><stop offset="0" stop-color="#5b8cf0"/><stop offset=".55" stop-color="#9a66e8"/><stop offset="1" stop-color="#e04fd6"/></linearGradient></defs>
  <path d="M10 0.4 C15.5 0.4 19.9 3.5 19.9 7.6 C19.9 9.6 18.6 10.4 17 10.4 C16 10.4 15.6 11.2 15.9 12.4 C16.3 14 16.5 15.8 14.5 16.6 C13 17.1 11.5 17.1 10 17.1 C4.5 17.1 0.1 13.5 0.1 8.7 C0.1 4.1 4.5 0.4 10 0.4 Z" fill="url(#pg2)"/>
  <g fill="#2f2d50"><circle cx="4.1" cy="8.3" r="1.3"/><circle cx="7.4" cy="5.4" r="1.5"/><circle cx="11.9" cy="4.3" r="1.2"/><circle cx="15.6" cy="5.2" r="1.05"/><circle cx="10.8" cy="11.7" r="1.9"/></g>
 </svg>
 <div class="abs" style="left:70px;top:0;height:59px;line-height:59px;font-size:19px;font-weight:bold;color:#e8e9ea">Legend</div>
 <div class="abs lg" style="left:1845px;top:0;width:600px;height:59px;line-height:59px;font-size:18px;color:#a5a8ad;white-space:nowrap;-webkit-text-stroke:.3px currentColor">
  <i class="ld" style="left:0.7px;background:#ee9a4f"></i><span style="left:20px">Gold</span>
  <i class="ld" style="left:79.5px;background:#3f8cf2"></i><span style="left:98.5px">Government Bond</span>
  <i class="ld" style="left:264.6px;background:#c64fe3"></i><span style="left:283px">Corporate Bond</span>
  <i class="ld" style="left:432px;background:#5bc862"></i><span style="left:450.5px">ETF</span>
  <i class="ld" style="left:503px;background:#5ec4f2"></i><span style="left:521px">Current Account</span>
 </div>
 <svg class="abs" style="left:35px;top:83px" width="17" height="22" viewBox="0 0 17 22">
  <defs><linearGradient id="sg" x1="0" y1="0" x2="0" y2="1"><stop offset="0" stop-color="#4a92f2"/><stop offset="1" stop-color="#62c8f4"/></linearGradient></defs>
  <path d="M14.6 2 H2.2 L8.6 10.8 L2.2 19.6 H14.6" fill="none" stroke="url(#sg)" stroke-width="3" stroke-linejoin="round" stroke-linecap="round"/>
 </svg>
 <div class="abs" style="left:63px;top:59px;height:75px;line-height:75px;font-size:23px;font-weight:bold;color:#eceded">Total</div>
 <div class="abs" style="right:206.5px;top:59px;height:75px;line-height:75px;font-size:23.5px;letter-spacing:1.6px;font-weight:bold;background-image:linear-gradient(90deg,#5cc665,#5fd3a8);-webkit-background-clip:text;background-clip:text;color:transparent;-webkit-text-stroke:.4px #5ecd86">100.00%</div>
 <div class="abs" style="right:33px;top:59px;height:75px;line-height:75px;font-size:23.5px;letter-spacing:.95px;font-weight:bold;color:#bec3c5;-webkit-text-stroke:.4px currentColor">€165,400.00</div>
</div>

</div>
</body></html>
